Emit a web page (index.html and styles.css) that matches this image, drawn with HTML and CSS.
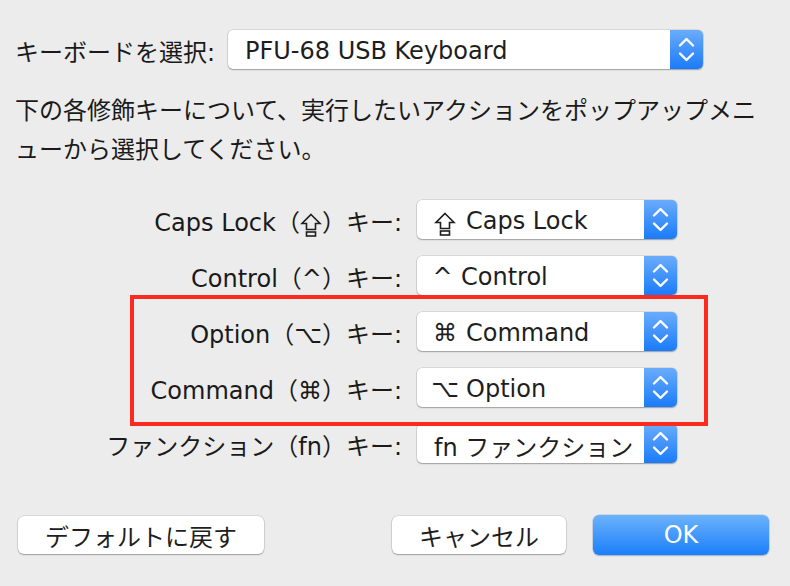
FILE: index.html
```html
<!DOCTYPE html>
<html lang="ja">
<head>
<meta charset="utf-8">
<title>修飾キー</title>
<link rel="stylesheet" href="styles.css">
</head>
<body>
<div class="dialog">
  <div class="kb-row">
    <div class="kb-label">キーボードを選択:</div>
    <div class="select kb-select">
      <div class="select-text">PFU-68 USB Keyboard</div>
      <div class="stepper"><svg viewBox="0 0 33 39" width="33" height="39"><polyline points="10,15.5 16.5,9 23,15.5"/><polyline points="10,23.5 16.5,30 23,23.5"/></svg></div>
    </div>
  </div>

  <p class="desc">下の各修飾キーについて、実行したいアクションをポップアップメニューから選択してください。</p>

  <div class="keys">
    <div class="key-label">Caps Lock（<svg class="caps" viewBox="0 0 22 24" width="22" height="24"><polygon points="11,1.5 20,10.5 15.5,10.5 15.5,16.5 6.5,16.5 6.5,10.5 2,10.5"/><rect x="6.5" y="19" width="9" height="4"/></svg>）キー:</div>
    <div class="select">
      <div class="select-text"><span class="sym"><svg class="caps" viewBox="0 0 22 24" width="22" height="24"><polygon points="11,1.5 20,10.5 15.5,10.5 15.5,16.5 6.5,16.5 6.5,10.5 2,10.5"/><rect x="6.5" y="19" width="9" height="4"/></svg></span>Caps Lock</div>
      <div class="stepper"><svg viewBox="0 0 33 39" width="33" height="39"><polyline points="10,15.5 16.5,9 23,15.5"/><polyline points="10,23.5 16.5,30 23,23.5"/></svg></div>
    </div>

    <div class="key-label">Control（^）キー:</div>
    <div class="select">
      <div class="select-text"><span class="sym sym-caret">^</span>Control</div>
      <div class="stepper"><svg viewBox="0 0 33 39" width="33" height="39"><polyline points="10,15.5 16.5,9 23,15.5"/><polyline points="10,23.5 16.5,30 23,23.5"/></svg></div>
    </div>

    <div class="key-label">Option（⌥）キー:</div>
    <div class="select">
      <div class="select-text"><span class="sym">⌘</span>Command</div>
      <div class="stepper"><svg viewBox="0 0 33 39" width="33" height="39"><polyline points="10,15.5 16.5,9 23,15.5"/><polyline points="10,23.5 16.5,30 23,23.5"/></svg></div>
    </div>

    <div class="key-label">Command（⌘）キー:</div>
    <div class="select">
      <div class="select-text"><span class="sym">⌥</span>Option</div>
      <div class="stepper"><svg viewBox="0 0 33 39" width="33" height="39"><polyline points="10,15.5 16.5,9 23,15.5"/><polyline points="10,23.5 16.5,30 23,23.5"/></svg></div>
    </div>

    <div class="key-label">ファンクション（fn）キー:</div>
    <div class="select">
      <div class="select-text">fn ファンクション</div>
      <div class="stepper"><svg viewBox="0 0 33 39" width="33" height="39"><polyline points="10,15.5 16.5,9 23,15.5"/><polyline points="10,23.5 16.5,30 23,23.5"/></svg></div>
    </div>
  </div>

  <div class="buttons">
    <div class="btn btn-default">デフォルトに戻す</div>
    <div class="btn btn-cancel">キャンセル</div>
    <div class="btn btn-ok">OK</div>
  </div>

  <div class="highlight"></div>
</div>
</body>
</html>
```

FILE: styles.css
```css
html, body {
  margin: 0;
  padding: 0;
  background: #ececec;
}

.dialog {
  position: relative;
  width: 790px;
  height: 586px;
  overflow: hidden;
  font-family: "DejaVu Sans", "Noto Sans CJK JP", sans-serif;
  font-size: 24px;
  color: #1a1a1a;
}

.kb-row {
  display: flex;
  align-items: center;
  padding: 30px 0 0 15px;
}

.kb-label {
  width: 213px;
  white-space: nowrap;
  padding-top: 1px;
}

.select {
  display: flex;
  align-items: stretch;
  height: 39px;
  background: #ffffff;
  border-radius: 5px;
  box-shadow: 0 0 0 0.5px rgba(0, 0, 0, 0.16), 0 1px 1.5px rgba(0, 0, 0, 0.28);
  box-sizing: border-box;
}

.kb-select {
  width: 475px;
}

.select-text {
  flex: 1;
  display: flex;
  align-items: center;
  padding-left: 17px;
  padding-top: 3px;
  white-space: nowrap;
  overflow: hidden;
  color: #1e1e1e;
}

.sym {
  display: inline-flex;
  justify-content: center;
  width: 22px;
  margin-right: 10px;
}

.sym-caret {
  width: 17px;
}

.caps {
  display: inline-block;
  vertical-align: -6px;
}

.sym .caps {
  position: relative;
  top: 3px;
}

.caps polygon,
.caps rect {
  fill: none;
  stroke: #1e1e1e;
  stroke-width: 1.6;
  stroke-linejoin: miter;
}

.stepper {
  width: 33px;
  flex: none;
  border-radius: 0 5px 5px 0;
  background: linear-gradient(#6aacfb, #1a7bfa);
}

.stepper svg {
  display: block;
}

.stepper polyline {
  fill: none;
  stroke: #ffffff;
  stroke-width: 2.4;
  stroke-linecap: round;
  stroke-linejoin: round;
}

.desc {
  margin: 23px 0 0 0;
  padding: 0 0 0 15px;
  width: 775px;
  box-sizing: border-box;
  line-height: 39px;
  line-break: loose;
}

.keys {
  display: grid;
  grid-template-columns: 402px 260px;
  grid-auto-rows: 39px;
  column-gap: 15px;
  row-gap: 17px;
  margin-top: 30px;
}

.key-label {
  justify-self: end;
  align-self: center;
  white-space: nowrap;
  padding-top: 2px;
}

.buttons {
  display: flex;
  align-items: center;
  margin-top: 52px;
  padding: 0 21px 0 18px;
}

.btn {
  height: 38px;
  display: flex;
  align-items: center;
  justify-content: center;
  background: #ffffff;
  border-radius: 6px;
  box-shadow: 0 0 0 0.5px rgba(0, 0, 0, 0.16), 0 1px 1.5px rgba(0, 0, 0, 0.28);
  color: #1e1e1e;
  white-space: nowrap;
}

.btn-default {
  width: 246px;
}

.btn-cancel {
  width: 174px;
  margin-left: auto;
}

.btn-ok {
  width: 176px;
  height: 40px;
  margin-left: 27px;
  color: #ffffff;
  background: linear-gradient(#6cb2fb, #1b7ffb);
  box-shadow: 0 0 0 0.5px rgba(0, 80, 200, 0.25), 0 1px 1.5px rgba(0, 0, 0, 0.2);
}

.highlight {
  position: absolute;
  left: 130px;
  top: 295px;
  width: 578px;
  height: 131px;
  box-sizing: border-box;
  border: 4px solid #fd2b1f;
  pointer-events: none;
}
```
